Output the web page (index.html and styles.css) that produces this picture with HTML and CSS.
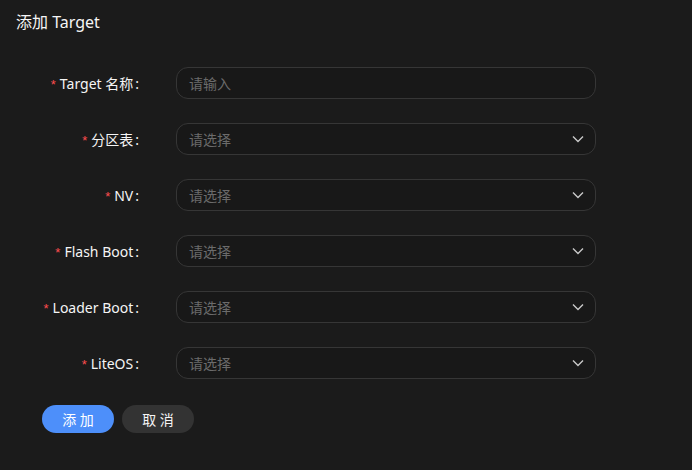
FILE: index.html
```html
<!DOCTYPE html>
<html lang="zh-CN">
<head>
    <meta charset="UTF-8">
    <meta name="viewport" content="width=device-width, initial-scale=1.0">
    <title>添加 Target</title>
    <link rel="stylesheet" href="styles.css">
</head>
<body>
    <h1 class="title">添加 Target</h1>
    <form class="form">
        <div class="row">
            <label class="label"><span class="req">*</span>Target 名称<span class="colon">:</span></label>
            <div class="field"><span class="placeholder">请输入</span></div>
        </div>
        <div class="row">
            <label class="label"><span class="req">*</span>分区表<span class="colon">:</span></label>
            <div class="field select"><span class="placeholder">请选择</span><svg class="arrow" viewBox="0 0 12 12"><path d="M1 3.5 6 8.5l5-5"/></svg></div>
        </div>
        <div class="row">
            <label class="label"><span class="req">*</span>NV<span class="colon">:</span></label>
            <div class="field select"><span class="placeholder">请选择</span><svg class="arrow" viewBox="0 0 12 12"><path d="M1 3.5 6 8.5l5-5"/></svg></div>
        </div>
        <div class="row">
            <label class="label"><span class="req">*</span>Flash Boot<span class="colon">:</span></label>
            <div class="field select"><span class="placeholder">请选择</span><svg class="arrow" viewBox="0 0 12 12"><path d="M1 3.5 6 8.5l5-5"/></svg></div>
        </div>
        <div class="row">
            <label class="label"><span class="req">*</span>Loader Boot<span class="colon">:</span></label>
            <div class="field select"><span class="placeholder">请选择</span><svg class="arrow" viewBox="0 0 12 12"><path d="M1 3.5 6 8.5l5-5"/></svg></div>
        </div>
        <div class="row">
            <label class="label"><span class="req">*</span>LiteOS<span class="colon">:</span></label>
            <div class="field select"><span class="placeholder">请选择</span><svg class="arrow" viewBox="0 0 12 12"><path d="M1 3.5 6 8.5l5-5"/></svg></div>
        </div>
        <div class="actions">
            <button type="button" class="btn primary">添 加</button>
            <button type="button" class="btn">取 消</button>
        </div>
    </form>
</body>
</html>
```

FILE: styles.css
```css
body { margin: 0; background: #1b1b1b; color: #f0f0f0; font-family: "Noto Sans", "Noto Sans CJK SC", sans-serif; font-size: 14px; }
.title { margin: 0; padding: 11px 16px 0; font-size: 16px; font-weight: normal; line-height: 22px; color: #f5f5f5; }
.form { padding-top: 34px; }
.row { display: flex; align-items: center; height: 32px; margin-bottom: 24px; }
.label { width: 176px; padding-right: 37px; box-sizing: border-box; text-align: right; white-space: nowrap; color: #f5f5f5; }
.req { color: #ff4d4f; margin-right: 4px; font-size: 13px; font-family: SimSun, "Liberation Sans", sans-serif; }
.colon { margin-left: 2px; }
.field { width: 420px; height: 32px; box-sizing: border-box; border: 1px solid #363636; border-radius: 12px; background: #181818; display: flex; align-items: center; justify-content: space-between; padding: 0 11px 0 12px; }
.placeholder { color: #6b6b6b; }
.arrow { width: 12px; height: 12px; fill: none; stroke: #c8c8c8; stroke-width: 1.4; }
.actions { display: flex; gap: 8px; padding: 2px 0 0 42px; }
.btn { width: 72px; height: 28px; border: none; border-radius: 14px; background: #333333; color: #f5f5f5; font-family: inherit; font-size: 14px; cursor: pointer; }
.btn.primary { background: #4d8ffa; color: #fff; }
```
